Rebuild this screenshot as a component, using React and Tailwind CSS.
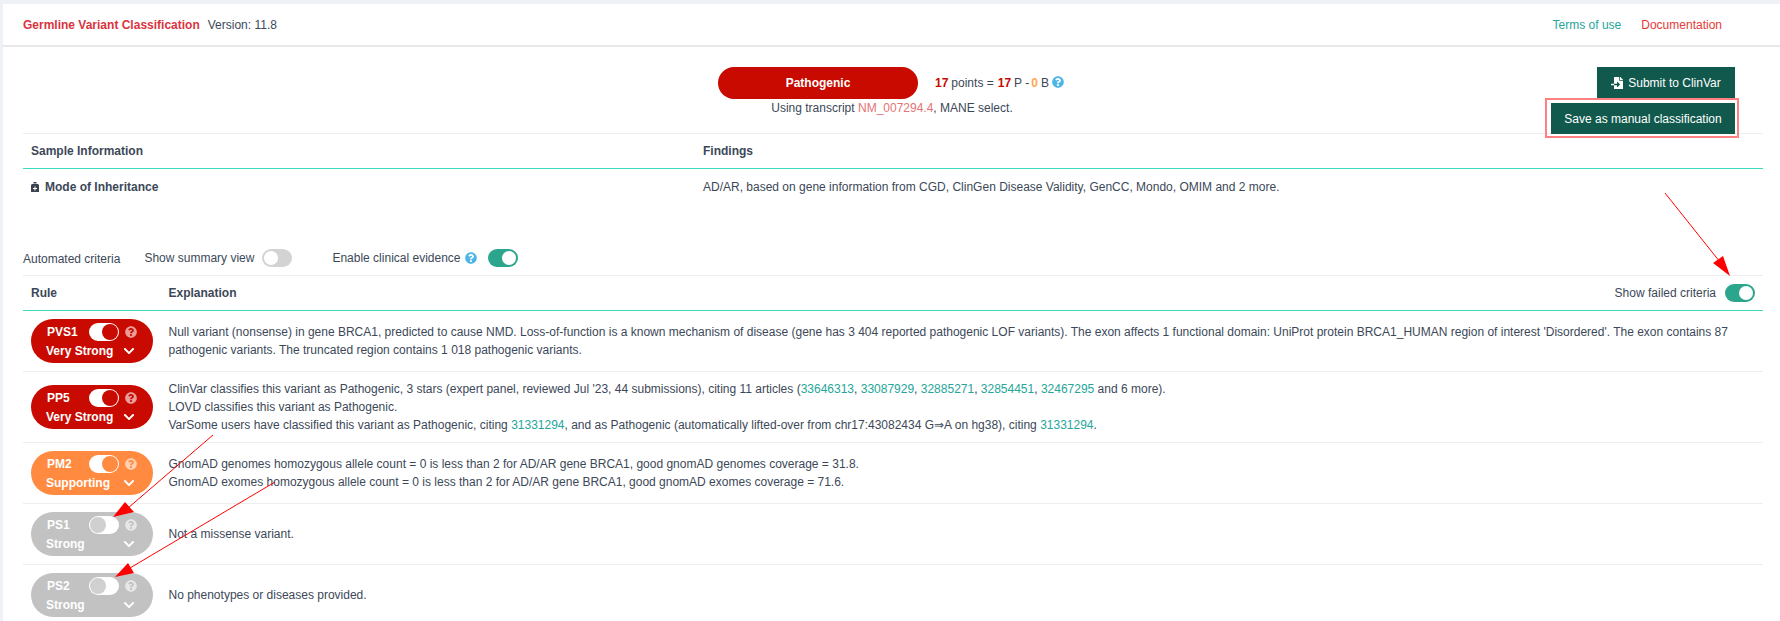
import React from 'react';
import { FaFileImport, FaQuestionCircle, FaChevronDown } from 'react-icons/fa';

const PubLink = ({ children }) => <a className="text-[#26a69a]">{children}</a>;

const BottleIcon = () => (
  <svg width="8" height="10" viewBox="0 0 8 10" className="mr-[6px]">
    <path d="M2.5 0h3v1.5h-3z M1 2h6l1 1v7H0V3z" fill="#3c4250" />
    <path d="M3.5 4.5h1v1.5h1.5v1H4.5v1.5h-1V7H2V6h1.5z" fill="#ffffff" />
  </svg>
);

const Toggle = ({ on, className = '' }) => (
  <div className={`w-[30px] h-[18px] rounded-full flex items-center p-[2px] ${on ? 'justify-end' : 'justify-start'} ${className}`}>
    <div className="w-[14px] h-[14px] rounded-full bg-white" />
  </div>
);

const PillToggle = ({ on, knob }) => (
  <div className={`w-[30px] h-[18px] rounded-full bg-white flex items-center p-[1px] ${on ? 'justify-end' : 'justify-start'}`}>
    <div className={`w-[16px] h-[16px] rounded-full ${knob}`} />
  </div>
);

const RulePill = ({ name, strength, color, knob, on }) => (
  <div className={`w-[122px] h-[44px] rounded-full text-white font-bold pl-[16px] pr-[16px] pt-[4px] ${color}`}>
    <div className="flex items-center h-[18px]">
      <span className="w-[42px]">{name}</span>
      <PillToggle on={on} knob={knob} />
      <FaQuestionCircle className="ml-[6px] text-[12px] text-white/60" />
    </div>
    <div className="flex items-center justify-between h-[18px] mt-[1px]">
      <span className="-ml-[1px]">{strength}</span>
      <FaChevronDown className="text-[12px] mr-[2px]" />
    </div>
  </div>
);

const Row = ({ pill, children, height }) => (
  <div className={`flex items-center border-b border-[#eeeeee] pl-[8px] ${height}`}>
    <div className="w-[137.5px] shrink-0">{pill}</div>
    <div className="leading-[18px] pr-[10px]">{children}</div>
  </div>
);

const red = { color: 'bg-[#c80a00]', knob: 'bg-[#c80a00]', on: true };
const orange = { color: 'bg-[#ff8a40]', knob: 'bg-[#ff8a40]', on: true };
const grey = { color: 'bg-[#c2c2c2]', knob: 'bg-[#d0d0d0]', on: false };

const App = () => {
  return (
    <div className="relative h-[621px] overflow-hidden bg-[#eef2f7] pt-[4px] pl-[3px] text-[12px] text-[#3c4858] font-['Liberation_Sans',Arial,sans-serif]">
      <div className="bg-white h-full">
        {/* header */}
        <div className="h-[43px] flex items-center justify-between border-b-2 border-[#e8e8e8] pl-[20px] pr-[58px]">
          <div className="flex items-center gap-[8px]">
            <span className="font-bold text-[#d9343f]">Germline Variant Classification</span>
            <span>Version: 11.8</span>
          </div>
          <div className="flex items-center gap-[20px]">
            <a className="text-[#26a69a]">Terms of use</a>
            <a className="text-[#e53935]">Documentation</a>
          </div>
        </div>

        <div className="pl-[20px] pr-[17px]">
          {/* verdict */}
          <div className="relative h-[87px] border-b border-[#eeeeee]">
            <div className="pt-[20px] pl-[695px]">
              <div className="flex items-center h-[32px]">
                <div className="w-[200px] h-[32px] rounded-full bg-[#c80a00] text-white font-bold flex items-center justify-center">Pathogenic</div>
                <div className="ml-[17px] flex items-center">
                  <b className="text-[#c80a00]">17</b>
                  <span className="ml-[3px]">points =</span>
                  <b className="text-[#c80a00] ml-[4px]">17</b>
                  <span className="ml-[3px]">P -</span>
                  <b className="text-[#ffa64d] ml-[2px]">0</b>
                  <span className="ml-[3px]">B</span>
                  <FaQuestionCircle className="ml-[3px] -mt-[2px] text-[12px] text-[#4db6e6]" />
                </div>
              </div>
              <div className="mt-[1px] w-[348px] text-center leading-[16px]">
                Using transcript <a className="text-[#e57373]">NM_007294.4</a>, MANE select.
              </div>
            </div>
            <div className="absolute top-[20px] right-[28px] flex flex-col items-end">
              <button className="w-[138px] h-[31px] bg-[#11594d] text-white flex items-center justify-center gap-[5px]">
                <FaFileImport className="text-[12px]" />
                Submit to ClinVar
              </button>
              <div className="relative mt-[5px]">
                <button className="block w-[184px] h-[31px] bg-[#11594d] text-white">Save as manual classification</button>
                <div className="absolute -left-[6px] -right-[4px] -top-[5px] -bottom-[4px] border-2 border-[#ff8080]" />
              </div>
            </div>
          </div>

          {/* sample table */}
          <div className="flex items-center h-[35px] border-b border-[#3adbc0] font-bold pl-[8px]">
            <div className="w-[672px]">Sample Information</div>
            <div>Findings</div>
          </div>
          <div className="flex items-center h-[36px] pl-[8px]">
            <div className="w-[672px] flex items-center font-bold">
              <BottleIcon />
              Mode of Inheritance
            </div>
            <div>AD/AR, based on gene information from CGD, ClinGen Disease Validity, GenCC, Mondo, OMIM and 2 more.</div>
          </div>

          {/* criteria switches */}
          <div className="flex items-center h-[34px] mt-[37px] pb-[2px] border-b border-[#eeeeee]">
            <span className="mt-[2px]">Automated criteria</span>
            <span className="ml-[24px]">Show summary view</span>
            <Toggle className="ml-[8px] bg-[#d3d3d3]" />
            <span className="ml-[40px]">Enable clinical evidence</span>
            <FaQuestionCircle className="ml-[4px] text-[12px] text-[#4db6e6]" />
            <Toggle on className="ml-[11px] bg-[#2ca58d]" />
          </div>

          {/* rules table */}
          <div className="flex items-center h-[35px] border-b border-[#3adbc0] pl-[8px] pr-[8px]">
            <div className="w-[137.5px] font-bold">Rule</div>
            <div className="font-bold">Explanation</div>
            <div className="ml-auto flex items-center gap-[9px]">
              Show failed criteria
              <Toggle on className="bg-[#2ca58d]" />
            </div>
          </div>

          <Row height="h-[61px]" pill={<RulePill name="PVS1" strength="Very Strong" {...red} />}>
            Null variant (nonsense) in gene BRCA1, predicted to cause NMD. Loss-of-function is a known mechanism of disease (gene has 3 404 reported pathogenic LOF variants). The exon affects 1 functional domain: UniProt protein BRCA1_HUMAN region of interest 'Disordered'. The exon contains 87 pathogenic variants. The truncated region contains 1 018 pathogenic variants.
          </Row>
          <Row height="h-[71px]" pill={<RulePill name="PP5" strength="Very Strong" {...red} />}>
            <div>
              ClinVar classifies this variant as Pathogenic, 3 stars (expert panel, reviewed Jul '23, 44 submissions), citing 11 articles (<PubLink>33646313</PubLink>, <PubLink>33087929</PubLink>, <PubLink>32885271</PubLink>, <PubLink>32854451</PubLink>, <PubLink>32467295</PubLink> and 6 more).
            </div>
            <div>LOVD classifies this variant as Pathogenic.</div>
            <div>
              VarSome users have classified this variant as Pathogenic, citing <PubLink>31331294</PubLink>, and as Pathogenic (automatically lifted-over from chr17:43082434 G⇒A on hg38), citing <PubLink>31331294</PubLink>.
            </div>
          </Row>
          <Row height="h-[61px]" pill={<RulePill name="PM2" strength="Supporting" {...orange} />}>
            <div>GnomAD genomes homozygous allele count = 0 is less than 2 for AD/AR gene BRCA1, good gnomAD genomes coverage = 31.8.</div>
            <div>GnomAD exomes homozygous allele count = 0 is less than 2 for AD/AR gene BRCA1, good gnomAD exomes coverage = 71.6.</div>
          </Row>
          <Row height="h-[61px]" pill={<RulePill name="PS1" strength="Strong" {...grey} />}>
            Not a missense variant.
          </Row>
          <Row height="h-[61px]" pill={<RulePill name="PS2" strength="Strong" {...grey} />}>
            No phenotypes or diseases provided.
          </Row>
        </div>
      </div>

      {/* annotation arrows */}
      <svg className="absolute left-0 top-0 pointer-events-none" width="1780" height="621">
        <g stroke="#ff0000" strokeWidth="1" fill="#ff0000">
          <line x1="1665" y1="193" x2="1720" y2="262" />
          <polygon points="1730,276 1713,263 1723,256" stroke="none" />
          <line x1="213" y1="435" x2="128" y2="508" />
          <polygon points="113,517 125,502 134,512" stroke="none" />
          <line x1="275" y1="482" x2="130" y2="568" />
          <polygon points="115,577 128,563 134,573" stroke="none" />
        </g>
      </svg>
    </div>
  );
};

export default App;
